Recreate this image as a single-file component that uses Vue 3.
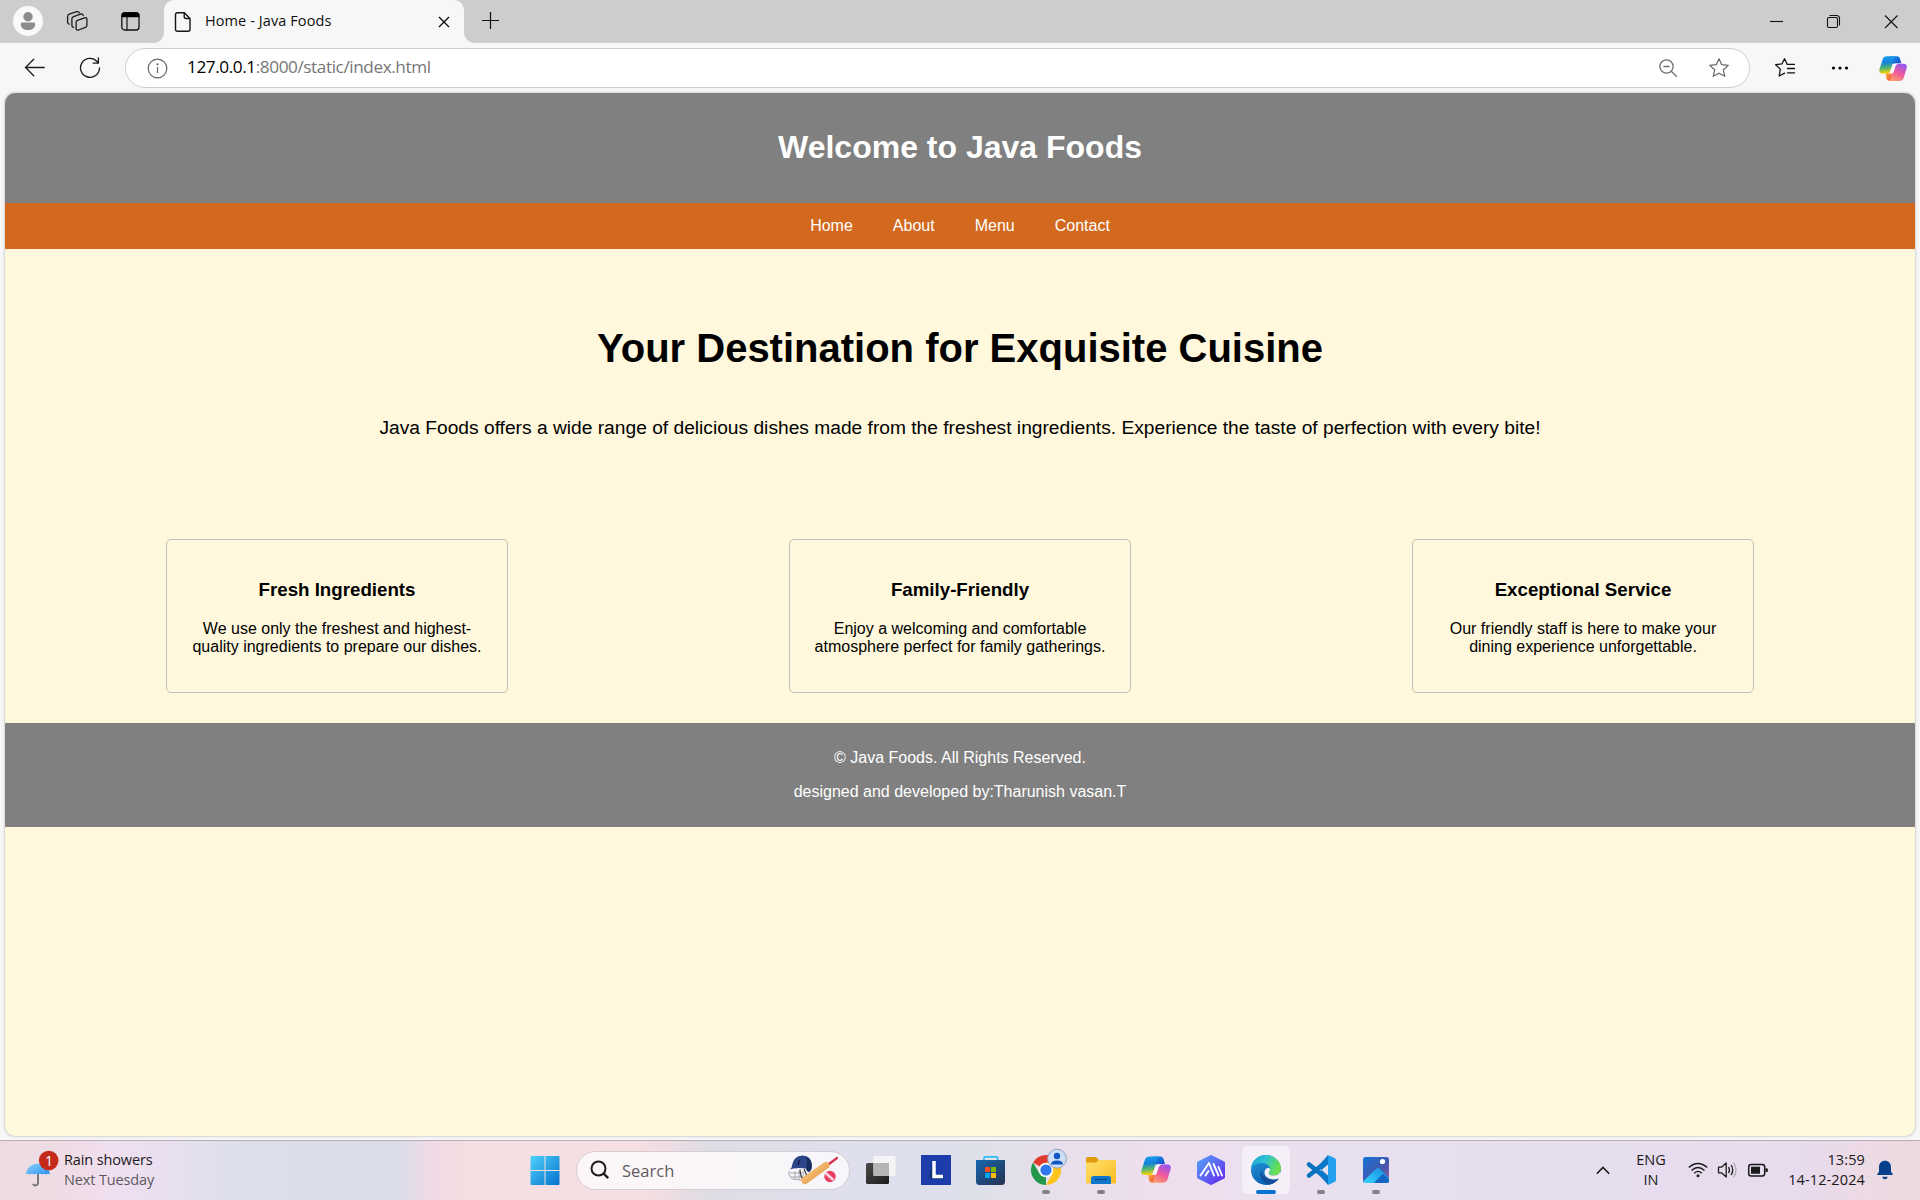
<script setup>
const navLinks = ['Home', 'About', 'Menu', 'Contact']
const features = [
  { title: 'Fresh Ingredients', text: 'We use only the freshest and highest-quality ingredients to prepare our dishes.' },
  { title: 'Family-Friendly', text: 'Enjoy a welcoming and comfortable atmosphere perfect for family gatherings.' },
  { title: 'Exceptional Service', text: 'Our friendly staff is here to make your dining experience unforgettable.' }
]
</script>

<template>
  <div class="screen">
    <svg class="defs" width="0" height="0" aria-hidden="true">
      <defs>
        <linearGradient id="cpA" x1="0" y1="0" x2="0.1" y2="1">
          <stop offset="0" stop-color="#1c9ff0" /><stop offset=".4" stop-color="#1583dc" /><stop offset=".72" stop-color="#58b768" /><stop offset="1" stop-color="#f5d20c" />
        </linearGradient>
        <linearGradient id="cpB" x1="0" y1="0" x2="1" y2="1">
          <stop offset="0" stop-color="#1697ea" /><stop offset="1" stop-color="#1646cf" />
        </linearGradient>
        <linearGradient id="cpC" x1=".7" y1="0" x2=".2" y2="1">
          <stop offset="0" stop-color="#9a55ee" /><stop offset=".5" stop-color="#ef5a9c" /><stop offset="1" stop-color="#ffa06a" />
        </linearGradient>
        <linearGradient id="cpD" x1="0" y1="0" x2="1" y2="1">
          <stop offset="0" stop-color="#ffb33c" /><stop offset="1" stop-color="#ee4638" />
        </linearGradient>
        <symbol id="copilot" viewBox="0 0 30 28">
          <path fill="url(#cpD)" d="M7 18h8l-2 7c-.5 1.500-1 2-2 2-2 0-2.600-1.200-3-2.500z" />
          <path fill="url(#cpB)" d="M12 1h7.500c1.800 0 2.600 1 3 2.500L24 8.500h-6l-6 1z" />
          <path fill="url(#cpC)" d="M21 9h5.500c3 0 3.800 2.200 3 5l-3 9.800c-.7 2.300-2 3.500-4.500 3.500H10.500c1.500-.3 2-1.300 2.500-3l4-12.500C17.700 9.700 19 9 21 9z" />
          <path fill="url(#cpA)" d="M8.500 1h10c-1.500.4-2 1.300-2.500 3l-3.800 12.500c-.6 2-1.700 2.900-3.700 2.900H3.300C.5 19.400-.2 17.300.6 14.600L3.800 4.500C4.500 2.200 6 1 8.500 1z" />
          <path fill="#fbf6fb" d="M15.500 9.200h5.300c-1.900.4-2.700 1.100-3.200 2.700l-1.600 5c-.5 1.500-1.200 2.300-2.800 2.400H9.800c1.500-.5 2-1.300 2.500-2.800z" />
        </symbol>
        <linearGradient id="win" x1="0" y1="0" x2="1" y2="1"><stop offset="0" stop-color="#4fd3fb" /><stop offset="1" stop-color="#0470cc" /></linearGradient>
        <linearGradient id="umb" x1="0" y1="0" x2="1" y2="1"><stop offset="0" stop-color="#8fd3fb" /><stop offset="1" stop-color="#2a90ee" /></linearGradient>
        <linearGradient id="store" x1="0" y1="0" x2="1" y2="1"><stop offset="0" stop-color="#1668b0" /><stop offset="1" stop-color="#26304e" /></linearGradient>
        <linearGradient id="fold" x1="0" y1="0" x2="1" y2="1"><stop offset="0" stop-color="#ffe06f" /><stop offset="1" stop-color="#fbbc1e" /></linearGradient>
        <linearGradient id="hex" x1="0" y1="0" x2="1" y2="1"><stop offset="0" stop-color="#53a3f5" /><stop offset="1" stop-color="#6527ee" /></linearGradient>
        <linearGradient id="edgeTop" x1="0" y1="0" x2="1" y2=".4"><stop offset="0" stop-color="#1b9fdc" /><stop offset=".5" stop-color="#2bc3cf" /><stop offset="1" stop-color="#6ce04c" /></linearGradient>
        <linearGradient id="edgeLeft" x1="0" y1="0" x2=".5" y2="1"><stop offset="0" stop-color="#249fe0" /><stop offset="1" stop-color="#0b5cb0" /></linearGradient>
        <linearGradient id="photo" x1="0" y1="0" x2="1" y2="1"><stop offset="0" stop-color="#1474d4" /><stop offset=".6" stop-color="#4656ac" /><stop offset="1" stop-color="#a05c9c" /></linearGradient>
        <linearGradient id="hill" x1="0" y1="1" x2="1" y2="0"><stop offset="0" stop-color="#37d3fb" /><stop offset="1" stop-color="#1386e0" /></linearGradient>
        <linearGradient id="tv" x1="0" y1="0" x2="1" y2="1"><stop offset="0" stop-color="#4a4a48" /><stop offset="1" stop-color="#1c1c1c" /></linearGradient>
        <linearGradient id="bat" x1="0" y1="0" x2="1" y2="1"><stop offset="0" stop-color="#ffd08a" /><stop offset="1" stop-color="#dd8f3c" /></linearGradient>
      </defs>
    </svg>

    <div class="tabstrip">
      <svg class="profile" width="30" height="30" viewBox="0 0 30 30"><circle cx="15" cy="15" r="15" fill="#f9f9f9" /><circle cx="15" cy="10.700" r="4.700" fill="#8c8c8c" /><path fill="#8c8c8c" d="M9.500 16.500h11c1 0 1.700.6 1.700 1.600 0 4-3 6-7.200 6s-7.200-2-7.200-6c0-1 .7-1.600 1.700-1.600z" /></svg>
      <svg class="workspaces" width="24" height="24" viewBox="0 0 24 24" fill="none" stroke="#1b1b1b" stroke-width="1.300" stroke-linejoin="round" stroke-linecap="round"><path d="M11.400 11.400 18.600 8.800Q20.900 8.200 20.900 10.400v5.800q0 1.500-1.400 2.100L12.600 21Q10.100 21.700 10.100 19.500V13q0-1.100 1.300-1.600z" /><path d="M17.300 6.500Q16.700 4.500 14.500 5.200L7.600 7.700Q5.900 8.300 5.900 9.900v6.300q0 1.900 1.600 2.200" /><path d="M13.300 4q-.6-1.900-2.600-1.300L3.300 5.200Q1.600 5.800 1.600 7.400V13q0 1.800 1.600 2.200" /></svg>
      <svg class="tabmenu" width="19" height="19" viewBox="0 0 19 19"><rect x=".8" y=".8" width="17.200" height="17.200" rx="3" fill="none" stroke="#111" stroke-width="1.300" /><path fill="#000" d="M.5 5.300V3A2.700 2.700 0 0 1 3.200.3h12.500A2.700 2.700 0 0 1 18.400 3v2.300z" /><path d="M6 5v13" stroke="#111" stroke-width="1.200" /></svg>
      <div class="tab">
        <svg class="file" width="18" height="22" viewBox="0 0 18 22" fill="none" stroke="#151515" stroke-width="1.400" stroke-linejoin="round"><path d="M3.500 1.700h6.800L16 7.400v10.800q0 2-2 2H3.500q-2 0-2-2V3.700q0-2 2-2z" /><path d="M10.200 1.700v3.800q0 2 2 2H16" /></svg>
        <span class="tab-title">Home - Java Foods</span>
        <svg class="tab-x" width="12" height="12" viewBox="0 0 12 12" stroke="#111" stroke-width="1.400"><path d="M1 1l10 10M11 1 1 11" /></svg>
      </div>
      <svg class="plus" width="18" height="18" viewBox="0 0 18 18" stroke="#111" stroke-width="1.200"><path d="M0 8.500h17M8.500 0v17" /></svg>
      <svg class="wincontrols" width="130" height="16" viewBox="0 0 130 16" fill="none" stroke="#111" stroke-width="1.100"><path d="M0 7.500h13" /><rect x="57.500" y="3.500" width="10" height="10" rx="1.500" /><path d="M59.500 1.500h7q3 0 3 3v7M115 1.500l12.500 12.500M127.500 1.500 115 14" /></svg>
    </div>

    <div class="toolbar">
      <svg class="back" width="22" height="20" viewBox="0 0 22 20" fill="none" stroke="#1a1a1a" stroke-width="1.300" stroke-linecap="round"><path d="M1.500 9.500h18.700M9.700 1.200 1.500 9.500l8.200 8.300" /></svg>
      <svg class="reload" width="22" height="22" viewBox="0 0 22 22" fill="none" stroke="#1a1a1a" stroke-width="1.300"><path d="M20.500 10.500a9.500 9.500 0 1 1-2.400-6l1.200 1.500M19.400.5v5.600h-5.700" /></svg>
      <div class="omnibox">
        <svg class="info" width="21" height="21" viewBox="0 0 21 21" fill="none" stroke="#666" stroke-width="1.200"><circle cx="10.500" cy="10.500" r="9.300" /><path d="M10.500 9v6" /><circle cx="10.500" cy="6.300" r=".5" fill="#666" /></svg>
        <span class="url"><b>127.0.0.1</b>:8000/static/index.html</span>
        <svg class="zoomout" width="19" height="19" viewBox="0 0 19 19" fill="none" stroke="#707070" stroke-width="1.300"><circle cx="7.500" cy="7.500" r="6.600" /><path d="M4.500 7.500h6M12.300 12.300l5.500 5.500" /></svg>
        <svg class="star" width="22" height="22" viewBox="0 0 22 22" fill="none" stroke="#666" stroke-width="1.200" stroke-linejoin="round"><path d="M11 1.700l2.700 6 6.600.7-5 4.400 1.500 6.500L11 16.200l-5.800 3.100 1.500-6.500-5-4.400 6.600-.7z" /></svg>
      </div>
      <svg class="favs" width="22" height="22" viewBox="0 0 22 22" fill="none" stroke="#111" stroke-width="1.300" stroke-linejoin="round" stroke-linecap="round"><path d="M13 6.700L10.500 1.700 8 6.800l-6.300.9 4.600 4.400L5.200 19l5.400-2.900M13 7.300h7.500M13.500 11.500h7M13.500 15.800h7" /></svg>
      <svg class="dots" width="18" height="6" viewBox="0 0 18 6"><circle cx="2.500" cy="3" r="1.600" /><circle cx="9" cy="3" r="1.600" /><circle cx="15.500" cy="3" r="1.600" /></svg>
      <svg class="cp" width="28" height="27"><use href="#copilot" /></svg>
    </div>

    <div class="viewport">
      <main class="page">
        <header class="banner"><h1>Welcome to Java Foods</h1></header>
        <nav class="nav"><a v-for="l in navLinks" :key="l">{{ l }}</a></nav>
        <section class="hero">
          <h2>Your Destination for Exquisite Cuisine</h2>
          <p>Java Foods offers a wide range of delicious dishes made from the freshest ingredients. Experience the taste of perfection with every bite!</p>
        </section>
        <section class="features">
          <article v-for="f in features" :key="f.title" class="card">
            <h3>{{ f.title }}</h3>
            <p>{{ f.text }}</p>
          </article>
        </section>
        <footer class="foot">
          <p>© Java Foods. All Rights Reserved.</p>
          <p>designed and developed by:Tharunish vasan.T</p>
        </footer>
      </main>
    </div>

    <div class="taskbar">
      <div class="weather">
        <svg width="36" height="40" viewBox="0 0 36 40">
          <path d="M13 24v10a2.600 2.600 0 0 1-5 .8" fill="none" stroke="#777" stroke-width="1.900" />
          <path fill="url(#umb)" d="M1 25.500C2 18 7 14.500 13 14.500s11 3.500 12 11q-2-1.500-4 0-2-1.500-4 0-2-1.500-4 0-2-1.500-4 0-2-1.500-4 0-2-1.500-4 0z" />
          <circle cx="23.700" cy="11.500" r="9.800" fill="#c42b1c" />
          <text x="24" y="16.500" text-anchor="middle" font-size="14" fill="#fff">1</text>
        </svg>
        <div class="weather-text"><span>Rain showers</span><span class="muted">Next Tuesday</span></div>
      </div>

      <div class="apps">
        <svg width="48" height="48" viewBox="0 0 48 48"><path fill="url(#win)" d="M9.500 11q0-1 1-1h13v14h-14zM24.500 10h13q1 0 1 1v13h-14zM9.500 25h14v14h-13q-1 0-1-1zM24.500 25h14v13q0 1-1 1h-13z" /></svg>
        <div class="search">
          <svg class="mag" width="20" height="20" viewBox="0 0 20 20" fill="none" stroke="#1c1c1c" stroke-width="2"><circle cx="8.500" cy="8.500" r="7" /><path d="M13.700 13.700l4.500 4.500" stroke-width="2.400" /></svg>
          <span>Search</span>
          <svg class="cricket" width="52" height="32" viewBox="0 0 52 32">
            <path d="M2 17q-1 6 4 8l8 1q3-2 2-9M3 19h13M4 23h11M8 17v8.500M12 17v9" fill="none" stroke="#a9aab2" stroke-width="1" />
            <path d="M13 15.500q0 8 5 11M17 15l3 7" stroke="#333" stroke-width="1.200" fill="none" />
            <path fill="#2c4488" d="M1.500 15.500q3.500-1 3.300-3.500Q6.500 1.500 15.500 1.500q9.300 0 9.300 10.500 0 4-2.800 6-2.500-.5-3-3.500-9-1.500-17.500 1z" />
            <path fill="#1b2c60" d="M19 3q6 2 5.800 9 0 4-2.800 6-2.500-.5-3-3.500 2-6 0-11.500z" />
            <path d="M12.500 6l-1.500 5" stroke="#14214c" stroke-width="1.500" />
            <path d="M42 10l8-6" stroke="#d9324e" stroke-width="2.200" stroke-linecap="round" />
            <path fill="url(#bat)" d="M13.500 25L37 8.500q2.500-1.500 4.500.5t.5 4.500L20 29.500q-2.500 1.500-4.500 0z" />
            <circle cx="43" cy="22.500" r="5.700" fill="#ec3e5e" /><path d="M38.500 19l8 7" stroke="#f7d5ee" stroke-width="2.600" />
          </svg>
        </div>
        <svg width="48" height="48" viewBox="0 0 48 48"><rect x="9" y="17" width="23" height="21" rx="1.500" fill="url(#tv)" /><rect x="16.500" y="10" width="22" height="20" rx="1" fill="#f4f4f4" /><path fill="#b4b6b4" d="M16.500 17H32v13H17.500q-1 0-1-1z" /></svg>
        <svg width="48" height="48" viewBox="0 0 48 48"><rect x="9" y="9" width="30" height="30" fill="#1d3cac" /><path fill="#10346a" d="M20 18l-3 13 3 2h11v-3H21z" /><path d="M22 15v15.500h9" fill="none" stroke="#fff" stroke-width="3.500" /></svg>
        <svg width="48" height="48" viewBox="0 0 48 48"><path d="M17 16v-4q0-1.200 1.200-1.200h11.300q1.200 0 1.200 1.200v4" fill="none" stroke="#2cc0f4" stroke-width="1.700" /><path fill="url(#store)" d="M9 14h29v21.500q0 3.500-3.500 3.500h-22Q9 39 9 35.500z" /><path fill="#f25022" d="M18 21h5v5h-5z" /><path fill="#7fba00" d="M24 21h5v5h-5z" /><path fill="#00a4ef" d="M18 27h5v5h-5z" /><path fill="#ffb900" d="M24 27h5v5h-5z" /></svg>
        <svg width="48" height="48" viewBox="0 0 48 48">
          <path fill="#e33b2e" d="M24 24L11 16.500A15 15 0 0 1 37 16.500z" /><path fill="#23984a" d="M24 24v15A15 15 0 0 1 11 16.500l6.500 11z" /><path fill="#fcc419" d="M24 16.500h13A15 15 0 0 1 24 39l6.500-11.300z" /><circle cx="24" cy="24" r="7.300" fill="#fff" /><circle cx="24" cy="24" r="5.600" fill="#2f78ee" />
          <circle cx="35" cy="12.700" r="9.400" fill="#cfdff8" stroke="#96a0b4" stroke-width="1" /><circle cx="35" cy="10" r="3.200" fill="#0f55c4" /><path fill="#0f55c4" d="M29 18.500q0-4 6-4t6 4z" /><rect x="20" y="44" width="8" height="4" rx="2" fill="#857f86" />
        </svg>
        <svg width="48" height="48" viewBox="0 0 48 48"><path fill="#df9c0b" d="M9 12.500q0-1.500 1.500-1.500h8.300l3.200 3v7H9z" /><path fill="url(#fold)" d="M9 16.500h10l3-2.500h17v23.500H9z" /><path fill="#0f78cc" d="M14 38v-5.500q0-2.500 2.500-2.500h15q2.500 0 2.500 2.500V38z" /><path d="M18 33.500h12" stroke="#0a4c8c" stroke-width="1.200" /><rect x="20" y="44" width="8" height="4" rx="2" fill="#857f86" /></svg>
        <svg width="48" height="48" viewBox="0 0 48 48"><use href="#copilot" x="9" y="9.500" width="30" height="28" /></svg>
        <svg width="48" height="48" viewBox="0 0 48 48"><path fill="url(#hex)" stroke="url(#hex)" stroke-width="3" stroke-linejoin="round" d="M24 10.500l12.500 6.300v14.400L24 37.500l-12.500-6.300V16.800z" /><path d="M13.500 29.500L22 17l5 12.500M18.500 29.500l3-4.500M26.500 18l5 11.500M31.500 21l3.500 8.500" fill="none" stroke="#fff" stroke-width="1.900" stroke-linecap="round" stroke-linejoin="round" /></svg>
        <svg class="active" width="48" height="48" viewBox="0 0 48 48">
          <circle cx="24" cy="24" r="15" fill="url(#edgeLeft)" />
          <path fill="url(#edgeTop)" d="M9.200 21.500C10 14 16.500 9 24 9c9 0 15 6.500 15 13.500 0 4.500-3.500 7-7.500 7-3 0-4.800-1-4.800-2.300 0-1 1.300-1.600 1.300-4 0-3.200-3.300-6.200-8-6.200-4.500 0-8.500 1.500-10.800 4.500z" />
          <path fill="#124e98" d="M19 24.500c-2 6 2 13 8.500 14 4-.3 7.500-3 9.500-6-6 3.300-16.500 1-18-8z" />
          <path fill="#f5f0f7" d="M28 23.500c0 2.200-1.300 2.700-1.300 3.700 0 1.300 1.800 2.300 4.800 2.300 3.500 0 6-1.500 7-4.500l1 6-3 1.500C30 35 22.500 32 22.500 26.500c.2-2.500 1.500-4.500 3.500-4.500 1.200 0 2 .5 2 1.500z" />
          <rect x="14" y="44" width="20" height="4" rx="2" fill="#0874d4" />
        </svg>
        <svg width="48" height="48" viewBox="0 0 48 48"><path d="M12 18.500l19 15M12 29.500l19-15" stroke="#0a72bd" stroke-width="4.600" stroke-linecap="round" /><path fill="#0a78c8" d="M31 9v9.500l-6.500 5.500-4-3z" /><path fill="#0a78c8" d="M31 39v-9.500L24.500 24l-4 3z" /><path fill="#23a0ee" d="M31 9l6.500 3q1.500.8 1.500 2v20q0 1.200-1.500 2L31 39z" /><rect x="20" y="44" width="8" height="4" rx="2" fill="#857f86" /></svg>
        <svg width="48" height="48" viewBox="0 0 48 48"><rect x="11" y="11" width="26" height="26" rx="2.500" fill="url(#photo)" /><path fill="url(#hill)" d="M11.500 35L24 22.800q2-1.800 4 0L37 32v2.500q0 2.500-2.500 2.500h-21Q11 37 11.500 35z" /><path fill="#1267c4" d="M22 37l8-8.500q1-1 2-.3l5 4.800v1.500q0 2.500-2.500 2.500z" /><circle cx="30.500" cy="15.500" r="2.600" fill="#fff" /><rect x="20" y="44" width="8" height="4" rx="2" fill="#857f86" /></svg>
      </div>

      <div class="tray">
        <svg class="chev" width="14" height="9" viewBox="0 0 14 9" fill="none" stroke="#1a1a1a" stroke-width="1.600"><path d="M.8 7.800L7 1.500l6.200 6.300" /></svg>
        <div class="lang"><span>ENG</span><span>IN</span></div>
        <svg class="status" width="82" height="20" viewBox="0 0 82 20" fill="none" stroke="#1a1a1a" stroke-width="1.300">
          <path d="M.8 7.500q9.200-8 18.400 0M3.500 10.500q6.500-6 13 0M6.200 13.200q3.800-3.600 7.600 0" /><circle cx="10" cy="15.800" r="1.500" fill="#1a1a1a" stroke="none" />
          <path d="M30.500 7.200h3L38.200 3v14l-4.700-4.200h-3z" stroke-linejoin="round" /><path d="M40.500 7q2 3 0 6M43 5q3.500 5 0 10" /><path d="M45.500 3q5 7 0 14" stroke="#b3abb8" />
          <rect x="60.700" y="4.500" width="16" height="11.500" rx="2.500" stroke-width="1.500" /><path fill="#1a1a1a" stroke="none" d="M63 6.800h9v7h-9zM77.500 8.300h1.200q1.300 0 1.300 1.900t-1.300 1.900h-1.200z" />
        </svg>
        <div class="clock"><span>13:59</span><span>14-12-2024</span></div>
        <svg class="bell" width="16" height="20" viewBox="0 0 16 20"><path fill="#04408c" d="M8 .8c3.500 0 6 2.600 6 6.200v4.700l1.800 2.500v.8H.2v-.8L2 11.700V7C2 3.400 4.500.8 8 .8zM5.300 16.700h5.400q-.4 2.500-2.700 2.500t-2.700-2.500z" /></svg>
      </div>
    </div>
  </div>
</template>

<style>
body { margin: 0; }
</style>

<style scoped>
.screen { width: 1920px; height: 1200px; display: flex; flex-direction: column; overflow: hidden; background: #f7f7f7; font-family: "Open Sans", "Noto Sans", sans-serif; color: #1a1a1a; }
svg { flex: none; display: block; }
.defs { position: absolute; }
h1, h2, h3, p { margin: 0; }

.tabstrip { height: 43px; flex: none; display: flex; align-items: flex-start; background: #cdcdcd; }
.profile { margin: 6px 0 0 13px; }
.workspaces { margin: 9px 0 0 23px; }
.tabmenu { margin: 12px 0 0 31px; }
.tab { position: relative; width: 300px; height: 43px; margin-left: 24px; background: #f7f7f7; border-radius: 10px 10px 0 0; display: flex; align-items: flex-start; }
.tab::before, .tab::after { content: ""; position: absolute; bottom: 0; width: 10px; height: 10px; }
.tab::before { left: -10px; background: radial-gradient(circle at 0 0, transparent 9.500px, #f7f7f7 10px); }
.tab::after { right: -10px; background: radial-gradient(circle at 100% 0, transparent 9.500px, #f7f7f7 10px); }
.file { margin: 11px 0 0 10px; }
.tab-title { margin: 10px 0 0 13px; width: 150px; font-size: 14.500px; line-height: 22px; white-space: nowrap; color: #111; letter-spacing: .09px; }
.tab-x { margin: 16px 0 0 83px; }
.plus { margin: 12px 0 0 18px; }
.wincontrols { margin: 14px 20px 0 auto; }

.toolbar { height: 50px; flex: none; display: flex; align-items: center; }
.back { margin-left: 24px; }
.reload { margin-left: 33px; }
.omnibox { box-sizing: border-box; margin-left: 24px; width: 1625px; height: 40px; border: 1px solid #cfcfcf; border-radius: 20px; background: #fff; display: flex; align-items: center; }
.info { margin-left: 21px; }
.url { margin-left: 19px; margin-right: auto; padding-bottom: 2px; font-size: 17.200px; line-height: 24px; color: #767676; white-space: nowrap; letter-spacing: -.42px; }
.url b { font-weight: 400; color: #000; }
.star { margin: 0 19px 0 30px; }
.favs { margin-left: 24px; }
.dots { margin-left: 35px; }
.cp { margin-left: 30px; }

.viewport { flex: 1; min-height: 0; padding: 0 5px 4px; display: flex; }
.page { flex: 1; background: #fff8dc; border-radius: 10px; overflow: hidden; box-shadow: 0 0 2px 1px #d3d3d6; font-family: "Liberation Sans", Arial, sans-serif; color: #000; text-align: center; }
.banner { height: 110px; background: #808080; color: #fff; }
.banner h1 { padding-top: 36px; font-size: 32px; line-height: 36px; }
.nav { height: 46px; background: #d2691e; color: #fff; display: flex; justify-content: center; gap: 40px; font-size: 16px; line-height: 46px; }
.hero { height: 290px; }
.hero h2 { padding-top: 76px; font-size: 40px; line-height: 46px; }
.hero p { padding-top: 46px; font-size: 19.200px; line-height: 22px; }
.features { padding: 0 161px; display: flex; justify-content: space-between; }
.card { box-sizing: border-box; width: 342px; height: 154px; border: 1px solid #c0c0c0; border-radius: 5px; padding: 39px 20px 0; }
.card h3 { font-size: 18.720px; line-height: 22px; }
.card p { margin-top: 19px; font-size: 16px; line-height: 18px; }
.foot { box-sizing: border-box; margin-top: 30px; height: 104px; padding-top: 26px; background: #808080; color: #fff; font-size: 16px; line-height: 18px; }
.foot p + p { margin-top: 16px; }

.taskbar { box-sizing: border-box; height: 60px; flex: none; border-top: 1px solid #b5afb7; display: flex; align-items: center; background: linear-gradient(90deg, #ecdce0 0, #efdce6 70px, #f0dff0 110px, #e8dff1 170px, #dddfeb 235px, #dadde9 400px, #f0dae6 432px, #f4dfe2 470px, #f5dfe2 640px, #eedce3 670px, #dddee4 710px, #dfdfee 840px, #dee0ea 970px, #eadfec 1090px, #efdfee 1170px, #e8dfef 1330px, #e6deef 1580px, #e8dbee 1800px, #ecdae6 1860px, #ecdade 1920px); }
.weather { width: 521px; display: flex; align-items: center; }
.weather svg { margin: 0 0 4px 25px; }
.weather-text { margin-left: 3px; display: flex; flex-direction: column; font-size: 14.500px; line-height: 20px; margin-top: -2px; white-space: nowrap; letter-spacing: -.13px; }
.muted { color: #5c5a60; }
.apps { display: flex; align-items: center; gap: 7px; margin-top: -1px; }
.search { box-sizing: border-box; width: 274px; height: 39px; border: 1px solid #d6ccd4; border-radius: 20px; background: linear-gradient(90deg, #fcf6f7, #f7f6fa); display: flex; align-items: center; font-size: 16.500px; color: #5f5c60; }
.mag { margin-left: 13px; }
.search span { margin-left: 12px; }
.cricket { margin: 0 10px 0 auto; }
.active { background: #f5f0f7; border-radius: 6px; }
.tray { margin-left: auto; margin-right: 27px; margin-top: -1px; display: flex; align-items: center; font-size: 14.500px; line-height: 20px; }
.lang { margin-left: 18px; width: 46px; text-align: center; display: flex; flex-direction: column; }
.status { margin-left: 14px; }
.clock { width: 95px; display: flex; flex-direction: column; text-align: right; letter-spacing: .12px; }
.bell { margin-left: 12px; }
</style>
